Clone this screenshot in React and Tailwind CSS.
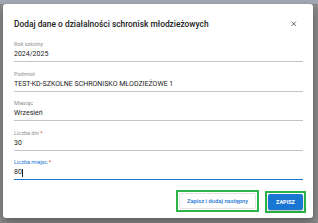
import { X } from 'lucide-react'

const fields = [
  { label: 'Rok szkolny', value: '2024/2025' },
  { label: 'Podmiot', value: 'TEST-KD-SZKOLNE SCHRONISKO MŁODZIEŻOWE 1' },
  { label: 'Miesiąc', value: 'Wrzesień' },
  { label: 'Liczba dni', value: '30', required: true },
  { label: 'Liczba miejsc', value: '80', required: true, focused: true },
]

function Field({ label, value, required, focused }) {
  return (
    <div className="flex flex-col">
      <div
        className={`h-[6px] text-[5.5px] leading-[6px] ${
          focused ? 'text-[#1976d2]' : 'text-[#8f8f8f]'
        }`}
      >
        {label}
        {required && <span className="text-[#d32f2f]"> *</span>}
      </div>
      <div
        className={`mt-[1px] flex h-[14px] items-center text-[7px] text-[#222] ${
          focused ? 'border-b border-[#1976d2]' : 'border-b border-[#c4c4c4]'
        }`}
      >
        <span>{value}</span>
        {focused && <span className="ml-[0.5px] h-[8px] w-[0.5px] bg-[#222]" />}
      </div>
    </div>
  )
}

export default function App() {
  return (
    <div
      className="h-[223px] w-[318px] overflow-hidden bg-[linear-gradient(to_bottom,#a4a8b4_0,#a4a8b4_4px,#8b8b8b_4px)] px-[3px] pt-[4px]"
      style={{ fontFamily: 'Roboto, "Noto Sans", sans-serif' }}
    >
      <div className="flex h-[214px] w-[310px] flex-col rounded-[3px] bg-white pl-[11px] pr-[7px] pt-[14px] shadow-[0_4px_10px_rgba(0,0,0,0.35)]">
        <div className="flex h-[12px] items-center justify-between pr-[9px]">
          <span className="text-[8.4px] font-medium text-[#212121]">
            Dodaj dane o działalności schronisk młodzieżowych
          </span>
          <X className="h-[7.5px] w-[7.5px] text-[#333]" strokeWidth={2.4} />
        </div>
        <div className="mt-[11px] flex flex-col gap-[8.5px] pr-[3px]">
          {fields.map((f) => (
            <Field key={f.label} {...f} />
          ))}
        </div>
        <div className="mt-[10px] flex items-start justify-end gap-[6px]">
          <div className="flex h-[22px] w-[83px] items-center justify-center border-2 border-[#2cb34a] p-[1px]">
            <div className="flex h-full w-full items-center justify-center rounded-[2px] border border-[#e3e3e3] text-[5.8px] font-medium text-[#1976d2]">
              Zapisz i dodaj następny
            </div>
          </div>
          <div className="mt-[1px] flex h-[22px] w-[41px] items-center justify-center border-2 border-[#2cb34a] p-[1px]">
            <div className="flex h-full w-full items-center justify-center rounded-[2px] bg-[#1976d2] text-[5.5px] font-bold text-white shadow-[0_1px_2px_rgba(0,0,0,0.3)]">
              ZAPISZ
            </div>
          </div>
        </div>
      </div>
    </div>
  )
}
